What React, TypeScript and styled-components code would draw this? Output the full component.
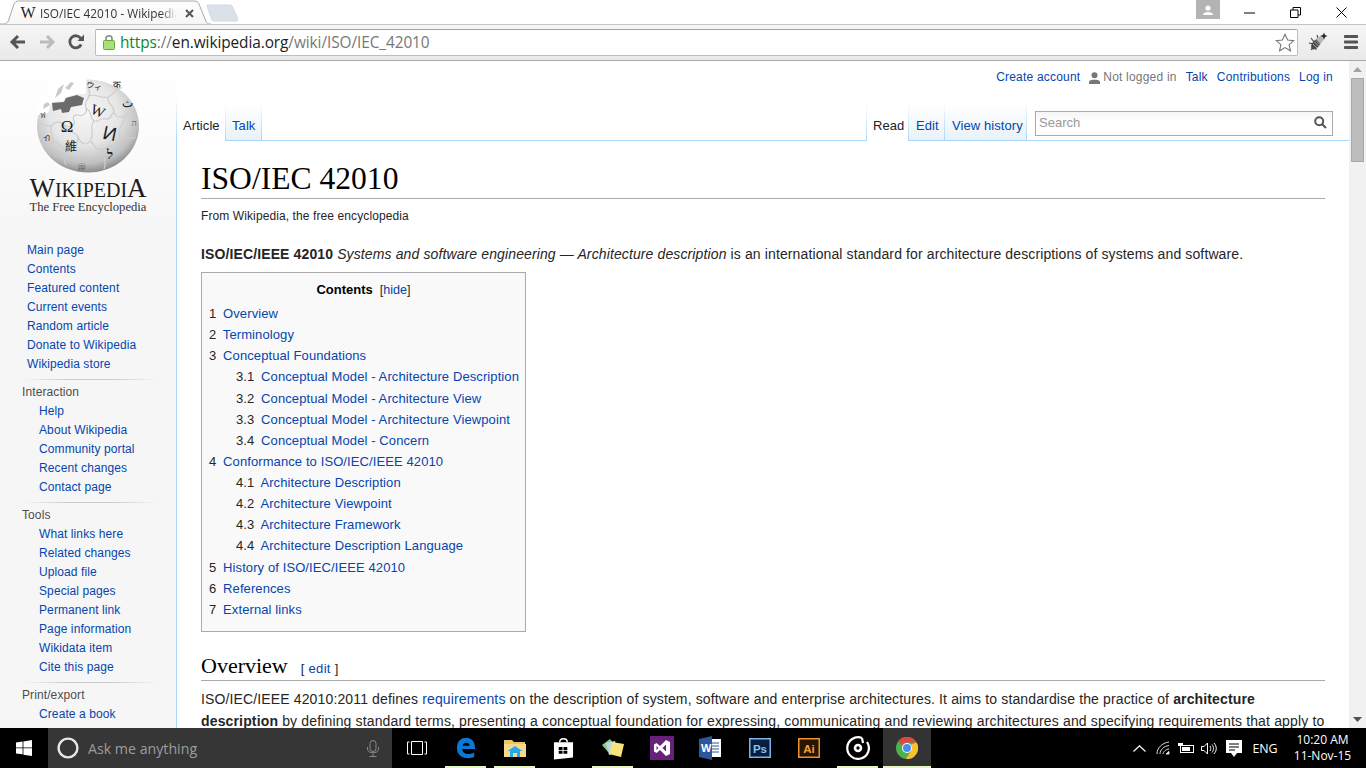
import React from "react";
import styled, { createGlobalStyle } from "styled-components";

const Global = createGlobalStyle`
  html, body { margin: 0; padding: 0; background: #fff; overflow: hidden; }
  * { box-sizing: border-box; }
`;

const Shell = styled.div`
  width: 1366px; height: 768px; display: flex; flex-direction: column; overflow: hidden;
  font-family: "Liberation Sans", Arial, sans-serif;
`;

/* ---------- browser chrome ---------- */
const TabStrip = styled.div`
  height: 24px; display: flex; background: #fff; position: relative; flex: none; padding-right: 2px;
`;
const TabArea = styled.div`
  width: 238px; height: 24px; position: relative; flex: none;
`;
const TabShape = styled.svg`
  position: absolute; left: 0; top: 0;
`;
const TabContent = styled.div`
  position: absolute; left: 20px; top: 4px; width: 176px; height: 18px; display: flex; align-items: center;
`;
const TabTitle = styled.span`
  margin-left: 4px; width: 137px; overflow: hidden; white-space: nowrap; font: 11.8px "Open Sans", sans-serif; color: #333;
  -webkit-mask-image: linear-gradient(to right, #000 88%, transparent 100%);
  mask-image: linear-gradient(to right, #000 88%, transparent 100%);
`;
const TabClose = styled.svg`
  margin-left: 8px; flex: none;
`;
const WMark = styled.span`
  font: 16px "Liberation Serif", serif; color: #222; width: 16px; text-align: center;
`;
const StripSpacer = styled.div`
  flex: 1;
`;
const ProfileBadge = styled.div`
  width: 24px; height: 19px; background: #b3b3b3; margin-right: 6px; display: flex; align-items: center; justify-content: center;
`;
const WinButton = styled.div`
  width: 46px; height: 24px; display: flex; align-items: center; justify-content: center;
`;
const Toolbar = styled.div`
  height: 37px; flex: none; display: flex; align-items: center; padding: 0 0 1px 0;
  background: linear-gradient(#f6f6f6, #e9e9e9);
  border-top: 1px solid #c4c4c4; border-bottom: 1px solid #a8a8a8;
`;
const NavButton = styled.div`
  width: 29px; height: 26px; margin-left: ${p => p.$ml ?? 0}px; display: flex; align-items: center; justify-content: center; flex: none;
`;
const Omnibox = styled.div`
  width: 1203px; height: 27px; margin-left: 5px; background: #fff; flex: none; display: flex; align-items: center;
  border: 1px solid #bdbdbd; border-top-color: #a3a3a3; border-radius: 2px; padding: 0 2px 0 7px;
`;
const UrlText = styled.div`
  margin-left: 5px; flex: 1; font: 15.4px "Open Sans", sans-serif; white-space: nowrap; color: #777; letter-spacing: -0.08px;
`;
const Scheme = styled.span`
  color: #078a2a;
`;
const Host = styled.span`
  color: #222;
`;
const ToolIcon = styled.div`
  width: 32px; height: 26px; margin-left: ${p => p.$ml ?? 0}px; display: flex; align-items: center; justify-content: center; flex: none;
`;

/* ---------- page ---------- */
const PageArea = styled.div`
  flex: 1; min-height: 0; display: flex; overflow: hidden;
`;
const Sidebar = styled.nav`
  width: 177px; flex: none; overflow: hidden;
  border-right: 1px solid transparent;
  border-image: linear-gradient(rgba(167,215,249,0) 38px, #a7d7f9 80px) 1;
  background: linear-gradient(#fff 0, #f6f6f6 180px, #f6f6f6 100%);
  display: flex; flex-direction: column;
`;
const LogoBlock = styled.div`
  height: 180px; display: flex; flex-direction: column; align-items: center; padding: 18px 0 0 0;
`;
const GlobeSvg = styled.svg`
  flex: none; display: block;
`;
const Wordmark = styled.div`
  font: 27px/22px "Liberation Serif", serif; color: #1c1c1c; margin-top: 4px; white-space: nowrap;
`;
const WordSmall = styled.span`
  font-size: 20px;
`;
const Tagline = styled.div`
  font: 12.6px/14px "Liberation Serif", serif; color: #333; margin-top: -1px; white-space: nowrap;
`;
const NavList = styled.ul`
  list-style: none; margin: 0; padding: 0 0 0 ${p => p.$indent}px;
`;
const NavItem = styled.li`
  font-size: 12px; line-height: 19px; color: #0645ad; white-space: nowrap; letter-spacing: .1px;
`;
const NavHeading = styled.div`
  font-size: 12px; line-height: 19px; color: #4d4d4d; padding-left: 22px; letter-spacing: .1px;
`;
const NavRule = styled.div`
  height: 1px; margin: 5px 17px 3px 22px;
  background: linear-gradient(to right, rgba(200,204,209,0), #c8ccd1 33%, #c8ccd1 66%, rgba(200,204,209,0));
`;
const Main = styled.div`
  flex: 1; min-width: 0; display: flex; flex-direction: column;
`;
const Personal = styled.div`
  height: 43px; flex: none; display: flex; justify-content: flex-end; gap: 9px; padding: 9px 16px 0 0;
  font-size: 12px; line-height: 15px; color: #0645ad; letter-spacing: .2px;
`;
const PersonalItem = styled.span`
  display: flex; align-items: flex-start; color: ${p => p.$muted ? "#777" : "#0645ad"};
`;
const PersonIcon = styled.svg`
  margin: 2px 3px 0 0;
`;
const TabRow = styled.div`
  height: 37px; flex: none; display: flex; border-bottom: 1px solid #a7d7f9;
`;
const PageTab = styled.div`
  height: ${p => p.$sel ? 37 : 36}px; width: ${p => p.$w}px; padding: 14px 0 0 ${p => p.$pl ?? 5}px; font-size: 13px; line-height: 15px; flex: none;
  color: ${p => p.$sel ? "#222" : "#0645ad"};
  background: ${p => p.$sel ? "#fff" : "linear-gradient(#fff, #e8f2f8)"};
  white-space: nowrap; letter-spacing: .08px;
  border-image: linear-gradient(rgba(167,215,249,0), #a7d7f9) 1;
  border-width: 0 1px 0 ${p => p.$bl ? 1 : 0}px; border-style: solid;
`;
const TabGap = styled.div`
  flex: 1;
`;
const SearchBox = styled.div`
  width: 298px; height: 25px; margin: 7px 16px 0 8px; flex: none; border: 1px solid #aaa; display: flex; align-items: center;
  justify-content: space-between; padding: 0 5px 3px 3px; font-size: 13px; color: #999; background: linear-gradient(#f6f6f6, #fff 45%);
`;
const Content = styled.div`
  flex: 1; min-height: 0; padding: 0 24px; overflow: hidden; color: #252525; font-size: 14px; line-height: 22px;
`;
const Title = styled.h1`
  margin: 13px 0 0 0; height: 45px; font: 400 31.6px/50px "Liberation Serif", serif; color: #000; border-bottom: 1px solid #aaa;
`;
const SiteSub = styled.div`
  font-size: 12px; line-height: 16px; margin-top: 9px; color: #252525; letter-spacing: .1px;
`;
const Para = styled.p`
  margin: ${p => p.$m ?? "0"}; font-size: 14px; line-height: 22px; white-space: nowrap; letter-spacing: ${p => p.$ls ?? 0.12}px;
`;
const TocBox = styled.div`
  width: 325px; height: 360px; margin-top: 7px; background: #f9f9f9; border: 1px solid #aaa; padding: 7px 7px 0 7px;
`;
const TocTitle = styled.div`
  text-align: center; font-size: 13px; line-height: 20px; margin-bottom: 3px; color: #000;
`;
const TocBold = styled.b`
  font-weight: 700;
`;
const TocToggle = styled.span`
  font-weight: 400; font-size: 12.6px; margin-left: 7px; color: #252525;
`;
const A = styled.span`
  color: #0645ad;
`;
const TocLine = styled.div`
  height: 21.14px; line-height: 21.14px; padding-left: ${p => p.$sub ? 27 : 0}px; white-space: nowrap; color: #0645ad; font-size: 13px; letter-spacing: .1px;
`;
const TocNum = styled.span`
  color: #252525; margin-right: 3px;
`;
const H2 = styled.h2`
  margin: 20px 0 7px 0; height: 29px; font: 400 22px/28px "Liberation Serif", serif; color: #000; border-bottom: 1px solid #aaa; white-space: nowrap;
`;
const EditLink = styled.span`
  font: 13px "Liberation Sans", sans-serif; margin-left: 13px; color: #252525; letter-spacing: .3px;
`;
const Scrollbar = styled.div`
  width: 17px; flex: none; background: #f1f1f1; display: flex; flex-direction: column; align-items: center;
`;
const ArrowBtn = styled.div`
  height: 17px; flex: none; width: 100%; display: flex; align-items: center; justify-content: center;
`;
const Thumb = styled.div`
  width: 13px; height: 84px; background: #bcbcbc; border: 1px solid #a8a8a8; flex: none;
`;
const ScrollGap = styled.div`
  flex: 1;
`;

/* ---------- taskbar ---------- */
const Taskbar = styled.div`
  height: 40px; flex: none; background: #000; display: flex; align-items: stretch; color: #fff;
`;
const StartBtn = styled.div`
  width: 48px; flex: none; display: flex; align-items: center; justify-content: center;
`;
const SearchBar = styled.div`
  width: 344px; flex: none; background: #363636; display: flex; align-items: center; padding: 0 13px 0 9px;
`;
const SearchHint = styled.span`
  flex: 1; margin-left: 9px; font: 14.2px "Open Sans", sans-serif; color: #9d9d9d;
`;
const TaskSlot = styled.div`
  width: ${p => p.$w ?? 49}px; margin-left: ${p => p.$active ? 1 : 0}px; flex: none; display: flex; align-items: center; justify-content: center; position: relative;
  background: ${p => p.$active ? "#333" : "transparent"};
`;
const RunLine = styled.div`
  position: absolute; left: ${p => p.$wide ? 0 : 4}px; right: ${p => p.$wide ? 0 : 4}px; bottom: 0; height: 2px; background: #e4f7c2;
`;
const Tray = styled.div`
  flex: 1; display: flex; align-items: center; justify-content: flex-end;
`;
const TrayIcon = styled.div`
  width: ${p => p.$w ?? 23}px; flex: none; display: flex; align-items: center; justify-content: center;
`;
const Lang = styled.span`
  font: 12.4px "Open Sans", sans-serif; width: 36px; text-align: center; flex: none;
`;
const Clock = styled.div`
  width: 75px; margin: 0 6px 0 2px; text-align: center; font: 12px/16px "Open Sans", sans-serif; flex: none;
`;

/* ---------- drawings ---------- */
const Globe = () => (
  <GlobeSvg width="104" height="94" viewBox="0 0 104 94">
    <defs>
      <radialGradient id="g" cx="46%" cy="36%" r="68%">
        <stop offset="0" stopColor="#f7f7f7" />
        <stop offset=".5" stopColor="#e6e6e6" />
        <stop offset=".8" stopColor="#c0c0c0" />
        <stop offset="1" stopColor="#777" />
      </radialGradient>
    </defs>
    <ellipse cx="52" cy="47" rx="51" ry="46.5" fill="url(#g)" />
    <path d="M0 30 L4 22 L15 8 L25 1 L50 0 L50 15 L41 15 L30 18 L27 22 L16 23 L12 34 L2 36 Z" fill="#fff" />
    <path d="M16 24 L28 23 L30 19 L41 16 L48 19 L46 26 L35 28 L33 33 L26 34 L25 30 L17 32 Z" fill="#6b6b6b" />
    <path d="M7 30 L14 26 L12 23 L8 25 Z M19 19 L22 10 L28 5 L25 14 Z M29 9 L35 3 L38 4 L33 11 Z" fill="#c9c9c9" />
    <g fill="none" stroke="#cdcdcd" strokeWidth="1.2">
      <path d="M52 4 C50 10 56 12 53 17 C51 22 48 24 50 29 C52 34 46 38 42 36 C38 35 36 38 38 42 C40 46 34 50 28 46" />
      <path d="M52 17 C60 14 64 20 72 18 C78 16 80 8 86 9" />
      <path d="M72 18 C70 24 78 26 78 32 C78 38 84 40 90 36 C94 33 96 38 100 36" />
      <path d="M50 29 C56 32 54 40 58 42 C62 44 64 38 70 40 C74 41 76 36 78 32" />
      <path d="M58 42 C52 50 60 54 54 62 C50 68 44 64 42 58 C40 52 30 54 28 46" />
      <path d="M2 46 C8 42 12 50 16 46 C20 42 24 42 28 46" />
      <path d="M16 46 C12 54 20 58 16 64 C12 68 8 66 6 66" />
      <path d="M16 64 C24 60 24 70 32 72 C38 74 42 66 42 58" />
      <path d="M54 62 C60 66 58 72 66 70 C72 68 80 66 84 60 C88 56 94 62 100 58" />
      <path d="M66 70 C64 76 72 80 68 90 M32 72 C32 78 26 80 30 86 M84 60 C80 50 88 46 90 36" />
    </g>
    <g fontFamily="'Liberation Serif', serif" fill="#222">
      <text x="31" y="53" fontSize="17" textAnchor="middle">Ω</text>
      <text x="62" y="37" fontSize="15" textAnchor="middle" transform="rotate(22 62 32)">W</text>
      <text x="74" y="61" fontSize="19" textAnchor="middle" fontFamily="'Liberation Sans', sans-serif" transform="rotate(12 74 54)">И</text>
      <text x="35" y="72" fontSize="12" textAnchor="middle" fontFamily="'Noto Sans CJK TC', sans-serif">維</text>
      <text x="74" y="80" fontSize="13" textAnchor="middle" fontWeight="700">ל</text>
      <text x="91" y="28" fontSize="12" textAnchor="middle">ث</text>
      <text x="58" y="10" fontSize="8" textAnchor="middle" fontFamily="'Noto Sans CJK JP', sans-serif" transform="rotate(15 58 8)">ウィ</text>
      <text x="81" y="9" fontSize="10" textAnchor="middle">क</text>
      <text x="7" y="39" fontSize="8" textAnchor="middle" fill="#555">ฟ</text>
      <text x="10" y="62" fontSize="9" textAnchor="middle" fill="#555">ብ</text>
      <text x="46" y="90" fontSize="8" textAnchor="middle" fill="#555">இ</text>
      <text x="98" y="47" fontSize="9" textAnchor="middle" fill="#666">ה</text>
    </g>
  </GlobeSvg>
);

const TabOutline = () => (
  <TabShape width="238" height="24" viewBox="0 0 238 24">
    <defs>
      <linearGradient id="tabfill" x1="0" x2="0" y1="0" y2="1"><stop offset="0" stopColor="#fdfdfd" /><stop offset="1" stopColor="#f6f6f6" /></linearGradient>
    </defs>
    <path d="M0 24 H3 C7 24 8 22 9 19 L14 4 C15 2 16 1 19 1 H194 C197 1 198 2 199 4 L205 19 C206 22 207 24 211 24" fill="url(#tabfill)" stroke="#a9a9a9" />
    <path d="M207 6 C207 5 208 5 209 5 H230 C231 5 232 6 232 6 L238 19 C238 20 238 21 236 21 H214 C213 21 212 20 212 20 Z" fill="#dbe1ea" stroke="#d3d8e0" />
  </TabShape>
);

const Arrow = ({ flip, color }: { flip?: boolean; color: string }) => (
  <svg width="18" height="16" viewBox="0 0 18 16" style={flip ? { transform: "scaleX(-1)" } : undefined}>
    <path d="M16 8 H3 M9 2 L3 8 L9 14" fill="none" stroke={color} strokeWidth="3" />
  </svg>
);

const WinLogo = () => (
  <svg width="16" height="16" viewBox="0 0 16 16" fill="#fff">
    <path d="M0 2.4 L6.6 1.5 V7.4 H0 Z M7.4 1.4 L16 0 V7.4 H7.4 Z M0 8.2 H6.6 V14.2 L0 13.4 Z M7.4 8.2 H16 V16 L7.4 14.8 Z" />
  </svg>
);

const Edge = () => (
  <svg width="20" height="22" viewBox="0 0 22 24">
    <path d="M1 12 C1 3 8 0 13 1 C19 2 21 7 21 13 H7 C7 19 15 20 20 17 V22 C13 25 1 23 1 12 Z M7 9.5 H15 C15 5 8 5 7 9.5 Z" fill="#0a78d7" fillRule="evenodd" />
  </svg>
);
const Folder = () => (
  <svg width="22" height="19" viewBox="0 0 22 19">
    <path d="M0 1 H8 L10 3 H21 V18 H0 Z" fill="#e8c46a" />
    <path d="M0 5 H22 V18 H0 Z" fill="#f6d98a" />
    <path d="M6 18 V12 H3.5 L11 7 L18.5 12 H16 V18 H13 V14 H9 V18 Z" fill="#2aa8e8" />
  </svg>
);
const Store = () => (
  <svg width="21" height="24" viewBox="0 0 22 24">
    <path d="M1 6 H21 V22 L1 24 Z" fill="#fff" />
    <path d="M7 6 C7 1 15 1 15 6" fill="none" stroke="#fff" strokeWidth="1.5" />
    <path d="M6 11 H10 V14 H6 Z M11 11 H15 V14 H11 Z M6 15 H10 V18 H6 Z M11 15 H15 V18 H11 Z" fill="#000" />
  </svg>
);
const Sticky = () => (
  <svg width="24" height="20" viewBox="0 0 24 20">
    <path d="M1 7 L9 1 L15 8 L7 14 Z" fill="#8fc98c" />
    <path d="M5 5 L14 3 L17 14 L8 17 Z" fill="#b6d9ea" />
    <path d="M11 4 L23 6 L20 19 L8 16 Z" fill="#f6e37a" />
  </svg>
);
const VS = () => (
  <svg width="24" height="24" viewBox="0 0 24 24">
    <rect width="24" height="24" fill="#68217a" />
    <path d="M16 4 L20 6 V18 L16 20 L10 14 L6.5 17 L4 15.5 V8.5 L6.5 7 L10 10 Z M6.5 10 V14 L8.5 12 Z M16 8.5 L12.5 12 L16 15.5 Z" fill="#fff" fillRule="evenodd" />
  </svg>
);
const Word = () => (
  <svg width="23" height="24" viewBox="0 0 23 24">
    <path d="M9 3 H22 V21 H9 Z" fill="#fff" />
    <path d="M13 7 H20 M13 10 H20 M13 13 H20 M13 16 H20" stroke="#2b579a" />
    <path d="M0 3 L13 0 V24 L0 21 Z" fill="#2b579a" />
    <text x="2" y="16" fontSize="11" fontWeight="700" fill="#fff" fontFamily="'Liberation Sans', sans-serif">W</text>
  </svg>
);
const AppSquare = ({ bg, edge, fg, label }: { bg: string; edge: string; fg: string; label: string }) => (
  <svg width="22" height="20" viewBox="0 0 22 20">
    <rect x=".75" y=".75" width="20.5" height="18.5" fill={bg} stroke={edge} strokeWidth="1.5" />
    <text x="11" y="14.5" textAnchor="middle" fontSize="11.5" fontWeight="700" fill={fg} fontFamily="'Liberation Sans', sans-serif">{label}</text>
  </svg>
);
const Groove = () => (
  <svg width="24" height="24" viewBox="0 0 24 24" fill="none" stroke="#fff">
    <path d="M16 2 A10.8 10.8 0 1 0 21 6" strokeWidth="2.2" />
    <path d="M16 2 L17 7" strokeWidth="2.2" />
    <circle cx="12" cy="12" r="3" strokeWidth="2.6" />
  </svg>
);
const Chrome = () => (
  <svg width="22" height="22" viewBox="0 0 22 22">
    <circle cx="11" cy="11" r="11" fill="#4caf50" />
    <path d="M11 0 A11 11 0 0 1 20.6 5.5 H11 A5.5 5.5 0 0 0 6 8.5 L2.2 4.3 A11 11 0 0 1 11 0 Z" fill="#e0483e" />
    <path d="M20.6 5.5 A11 11 0 0 1 10 22 L15 13.5 A5.5 5.5 0 0 0 15 7.5 Z" fill="#fbc02d" />
    <circle cx="11" cy="11" r="5" fill="#fff" />
    <circle cx="11" cy="11" r="4" fill="#4a8cf0" />
  </svg>
);
const Bug = () => (
  <svg width="20" height="20" viewBox="0 0 20 20">
    <path d="M3 6 L6 10 M1 11 L5 12 M3 18 L6 14 M8 18 L8 15 M9 3 L10 6" stroke="#444" strokeWidth="1.1" fill="none" />
    <ellipse cx="8" cy="12" rx="3.6" ry="6.4" transform="rotate(40 8 12)" fill="#4a4a4a" />
    <path d="M5 12 L9 16 M6.5 10 L10.5 14 M8 8.5 L12 12.5" stroke="#bbb" strokeWidth=".8" />
    <path d="M8 7 L14.5 2.5 L17 6 L12.5 12 Z" fill="#b8b8b8" />
    <path d="M16 0.5 L17 3 L19.5 4 L17 5 L16 7.5 L15 5 L12.5 4 L15 3 Z" fill="#222" />
  </svg>
);

const mainNav = ["Main page", "Contents", "Featured content", "Current events", "Random article", "Donate to Wikipedia", "Wikipedia store"];
const interaction = ["Help", "About Wikipedia", "Community portal", "Recent changes", "Contact page"];
const tools = ["What links here", "Related changes", "Upload file", "Special pages", "Permanent link", "Page information", "Wikidata item", "Cite this page"];
const toc: [string, string, boolean][] = [
  ["1", "Overview", false], ["2", "Terminology", false], ["3", "Conceptual Foundations", false],
  ["3.1", "Conceptual Model - Architecture Description", true], ["3.2", "Conceptual Model - Architecture View", true],
  ["3.3", "Conceptual Model - Architecture Viewpoint", true], ["3.4", "Conceptual Model - Concern", true],
  ["4", "Conformance to ISO/IEC/IEEE 42010", false], ["4.1", "Architecture Description", true], ["4.2", "Architecture Viewpoint", true],
  ["4.3", "Architecture Framework", true], ["4.4", "Architecture Description Language", true],
  ["5", "History of ISO/IEC/IEEE 42010", false], ["6", "References", false], ["7", "External links", false],
];

export default function App() {
  return (
    <Shell>
      <Global />
      <TabStrip>
        <TabArea>
          <TabOutline />
          <TabContent>
            <WMark>W</WMark>
            <TabTitle>ISO/IEC 42010 - Wikipedia</TabTitle>
            <TabClose width="9" height="9" viewBox="0 0 9 9"><path d="M1 1 L8 8 M8 1 L1 8" stroke="#555" strokeWidth="2" /></TabClose>
          </TabContent>
        </TabArea>
        <StripSpacer />
        <ProfileBadge>
          <svg width="10" height="10" viewBox="0 0 10 10" fill="#fff"><circle cx="5" cy="3" r="2.6" /><path d="M0 10 C0 6 10 6 10 10 Z" /></svg>
        </ProfileBadge>
        <WinButton><svg width="11" height="11" viewBox="0 0 11 11"><path d="M0 6 H11" stroke="#000" /></svg></WinButton>
        <WinButton><svg width="11" height="11" viewBox="0 0 11 11" fill="none" stroke="#000"><path d="M.5 3 H8 V10.5 H.5 Z M3 3 V.5 H10.5 V8 H8" /></svg></WinButton>
        <WinButton><svg width="11" height="11" viewBox="0 0 11 11" stroke="#000"><path d="M.5 .5 L10.5 10.5 M10.5 .5 L.5 10.5" /></svg></WinButton>
      </TabStrip>
      <Toolbar>
        <NavButton $ml={3}><Arrow color="#555" /></NavButton>
        <NavButton><Arrow flip color="#bbb" /></NavButton>
        <NavButton>
          <svg width="16" height="16" viewBox="0 0 16 16" fill="none">
            <path d="M13.2 10.5 A6 6 0 1 1 13 4.7" stroke="#555" strokeWidth="2.8" />
            <path d="M9.5 7 H16 V0.5 Z" fill="#555" />
          </svg>
        </NavButton>
        <Omnibox>
          <svg width="12" height="16" viewBox="0 0 12 16">
            <path d="M3 7 V4.5 C3 .8 9 .8 9 4.5 V7" fill="none" stroke="#8a8a8a" strokeWidth="1.6" />
            <rect x=".5" y="6.5" width="11" height="9" rx="1" fill="#a8e07a" stroke="#6aa83a" />
          </svg>
          <UrlText><Scheme>https</Scheme>://<Host>en.wikipedia.org</Host>/wiki/ISO/IEC_42010</UrlText>
          <svg width="20" height="19" viewBox="0 0 20 19"><path d="M10 1.2 L12.6 7 L18.8 7.6 L14.1 11.7 L15.5 17.8 L10 14.6 L4.5 17.8 L5.9 11.7 L1.2 7.6 L7.4 7 Z" fill="#fff" stroke="#777" strokeWidth="1.1" /></svg>
        </Omnibox>
        <ToolIcon $ml={4}><Bug /></ToolIcon>
        <ToolIcon $ml={1}>
          <svg width="14" height="14" viewBox="0 0 14 14" fill="#555"><rect width="14" height="3" rx=".8" /><rect y="5.5" width="14" height="3" rx=".8" /><rect y="11" width="14" height="3" rx=".8" /></svg>
        </ToolIcon>
      </Toolbar>
      <PageArea>
        <Sidebar>
          <LogoBlock>
            <Globe />
            <Wordmark>W<WordSmall>IKIPEDI</WordSmall>A</Wordmark>
            <Tagline>The Free Encyclopedia</Tagline>
          </LogoBlock>
          <NavList $indent={27}>{mainNav.map(t => <NavItem key={t}>{t}</NavItem>)}</NavList>
          <NavRule />
          <NavHeading>Interaction</NavHeading>
          <NavList $indent={39}>{interaction.map(t => <NavItem key={t}>{t}</NavItem>)}</NavList>
          <NavRule />
          <NavHeading>Tools</NavHeading>
          <NavList $indent={39}>{tools.map(t => <NavItem key={t}>{t}</NavItem>)}</NavList>
          <NavRule />
          <NavHeading>Print/export</NavHeading>
          <NavList $indent={39}><NavItem>Create a book</NavItem></NavList>
        </Sidebar>
        <Main>
          <Personal>
            <PersonalItem>Create account</PersonalItem>
            <PersonalItem $muted>
              <PersonIcon width="11" height="12" viewBox="0 0 11 12" fill="#777"><circle cx="5.5" cy="3.2" r="3" /><path d="M0 12 V9.5 C0 7 11 7 11 9.5 V12 Z" /></PersonIcon>
              Not logged in
            </PersonalItem>
            <PersonalItem>Talk</PersonalItem>
            <PersonalItem>Contributions</PersonalItem>
            <PersonalItem>Log in</PersonalItem>
          </Personal>
          <TabRow>
            <PageTab $sel $w={49} $pl={6}>Article</PageTab>
            <PageTab $w={36} $pl={6}>Talk</PageTab>
            <TabGap />
            <PageTab $sel $bl $w={43} $pl={6}>Read</PageTab>
            <PageTab $w={36} $pl={7}>Edit</PageTab>
            <PageTab $w={82} $pl={7}>View history</PageTab>
            <SearchBox>
              Search
              <svg width="13" height="13" viewBox="0 0 13 13" fill="none" stroke="#555" strokeWidth="2"><circle cx="5.2" cy="5.2" r="4" /><path d="M8.2 8.2 L12 12" /></svg>
            </SearchBox>
          </TabRow>
          <Content>
            <Title>ISO/IEC 42010</Title>
            <SiteSub>From Wikipedia, the free encyclopedia</SiteSub>
            <Para $m="19px 0 0 0"><b>ISO/IEC/IEEE 42010</b> <i>Systems and software engineering — Architecture description</i> is an international standard for architecture descriptions of systems and software.</Para>
            <TocBox>
              <TocTitle><TocBold>Contents</TocBold><TocToggle>[<A>hide</A>]</TocToggle></TocTitle>
              {toc.map(([n, t, sub]) => (
                <TocLine key={n} $sub={sub}><TocNum>{n}</TocNum> {t}</TocLine>
              ))}
            </TocBox>
            <H2>Overview<EditLink>[ <A>edit</A> ]</EditLink></H2>
            <Para $ls={0.135}>ISO/IEC/IEEE 42010:2011 defines <A>requirements</A> on the description of system, software and enterprise architectures. It aims to standardise the practice of <b>architecture</b></Para>
            <Para $ls={0.15}><b>description</b> by defining standard terms, presenting a conceptual foundation for expressing, communicating and reviewing architectures and specifying requirements that apply to</Para>
          </Content>
        </Main>
        <Scrollbar>
          <ArrowBtn><svg width="9" height="5" viewBox="0 0 9 5"><path d="M0 5 L4.5 0 L9 5 Z" fill="#a3a3a3" /></svg></ArrowBtn>
          <Thumb />
          <ScrollGap />
          <ArrowBtn><svg width="9" height="5" viewBox="0 0 9 5"><path d="M0 0 L4.5 5 L9 0 Z" fill="#505050" /></svg></ArrowBtn>
        </Scrollbar>
      </PageArea>
      <Taskbar>
        <StartBtn><WinLogo /></StartBtn>
        <SearchBar>
          <svg width="22" height="22" viewBox="0 0 22 22"><circle cx="11" cy="11" r="9.4" fill="none" stroke="#e6e6e6" strokeWidth="2.4" /></svg>
          <SearchHint>Ask me anything</SearchHint>
          <svg width="12" height="17" viewBox="0 0 12 17" fill="none" stroke="#8a8a8a"><rect x="3" y=".5" width="6" height="11" rx="3" /><path d="M.5 7 V9 C.5 14 11.5 14 11.5 9 V7 M6 13.5 V16.5 M2.5 16.5 H9.5" /></svg>
        </SearchBar>
        <TaskSlot $w={49}>
          <svg width="20" height="14" viewBox="0 0 20 14" fill="none" stroke="#fff"><path d="M2.5 1 H.5 V13 H2.5 M17.5 1 H19.5 V13 H17.5 M4.5 .5 H15.5 V13.5 H4.5 Z" /></svg>
        </TaskSlot>
        <TaskSlot><Edge /><RunLine /></TaskSlot>
        <TaskSlot><Folder /><RunLine /></TaskSlot>
        <TaskSlot><Store /></TaskSlot>
        <TaskSlot><Sticky /><RunLine /></TaskSlot>
        <TaskSlot><VS /></TaskSlot>
        <TaskSlot><Word /></TaskSlot>
        <TaskSlot><AppSquare bg="#061e3d" edge="#7fb3e8" fg="#8ac2f2" label="Ps" /></TaskSlot>
        <TaskSlot><AppSquare bg="#2a1504" edge="#e8952a" fg="#f0a23a" label="Ai" /></TaskSlot>
        <TaskSlot><Groove /><RunLine /></TaskSlot>
        <TaskSlot $active $w={48}><Chrome /><RunLine $wide /></TaskSlot>
        <Tray>
          <TrayIcon $w={24}><svg width="13" height="7" viewBox="0 0 13 7" fill="none" stroke="#fff" strokeWidth="1.2"><path d="M.5 6.5 L6.5 .8 L12.5 6.5" /></svg></TrayIcon>
          <TrayIcon>
            <svg width="14" height="14" viewBox="0 0 14 14" fill="none" stroke="#ddd"><path d="M1 13 C1 7 6 2 13 1 M4 13 C4 9 8 5 13 4.5 M7 13 C7 11 10 8 13 8" /><path d="M10 13 H13 V10.5 Z" fill="#fff" /></svg>
          </TrayIcon>
          <TrayIcon>
            <svg width="16" height="12" viewBox="0 0 16 12"><rect x="2.5" y="3.5" width="13" height="7" fill="none" stroke="#fff" /><rect x="4" y="5" width="8" height="4" fill="#fff" /><path d="M0 1 H5 V4 H0 Z" fill="#fff" /></svg>
          </TrayIcon>
          <TrayIcon>
            <svg width="16" height="13" viewBox="0 0 16 13" fill="none" stroke="#fff"><path d="M.5 4.5 H3 L6.5 1 V12 L3 8.5 H.5 Z M9 4 C10 6 10 7 9 9 M11 2.5 C13 5 13 8 11 10.5 M13 1 C16 4.5 16 8.5 13 12" /></svg>
          </TrayIcon>
          <TrayIcon $w={27}>
            <svg width="16" height="17" viewBox="0 0 16 17"><path d="M0 0 H16 V13 H11 L8 17 L5 13 H0 Z" fill="#fff" /><path d="M3 4 H13 M3 7 H13 M3 10 H9" stroke="#000" /></svg>
          </TrayIcon>
          <Lang>ENG</Lang>
          <Clock>10:20 AM<br />11-Nov-15</Clock>
        </Tray>
      </Taskbar>
    </Shell>
  );
}
